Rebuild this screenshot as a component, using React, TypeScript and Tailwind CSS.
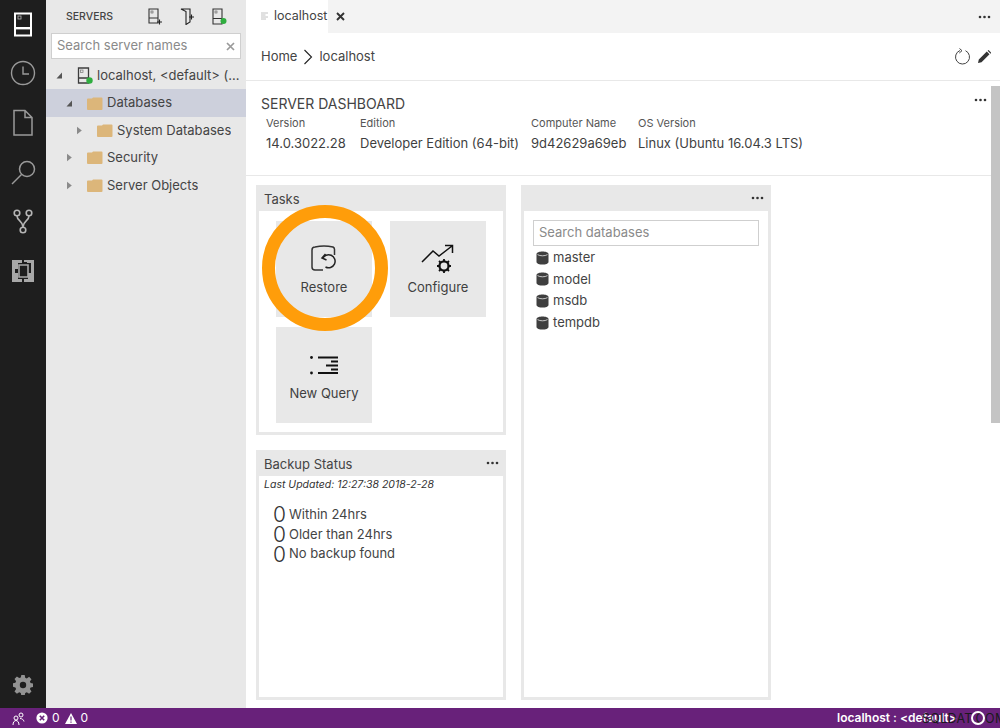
import React from "react";

const Dots = ({ className = "" }: { className?: string }) => (
  <svg width="13" height="4" viewBox="0 0 13 4" className={className}>
    <circle cx="2" cy="2" r="1.3" fill="#333" />
    <circle cx="6.5" cy="2" r="1.3" fill="#333" />
    <circle cx="11" cy="2" r="1.3" fill="#333" />
  </svg>
);

const Folder = () => (
  <svg width="16" height="13" viewBox="0 0 16 13" className="shrink-0">
    <path d="M0 2.5a1 1 0 0 1 1-1h4l1-1h8.5a1 1 0 0 1 1 1v10.5a1 1 0 0 1-1 1H1a1 1 0 0 1-1-1z" fill="#dcb67a" />
  </svg>
);

const Arrow = ({ open }: { open?: boolean }) => (
  <svg width="7" height="9" viewBox="0 0 7 9" className="shrink-0">
    {open ? <path d="M6 1.5V7.5H0.5z" fill="#555" /> : <path d="M1 0.8L5.8 4.5 1 8.2z" fill="#8a8a8a" />}
  </svg>
);

const ServerIcon = ({ dot }: { dot?: boolean }) => (
  <svg width="17" height="18" viewBox="0 0 17 18" className="shrink-0">
    <path d="M1.5 1h10v15h-10zM1.5 11h10" fill="none" stroke="#3c3c3c" strokeWidth="1.3" />
    <rect x="3.5" y="3" width="2.5" height="2.5" fill="none" stroke="#777" strokeWidth="0.7" />
    {dot && <circle cx="12.5" cy="13.5" r="3.2" fill="#2fae3f" />}
  </svg>
);

const Cylinder = () => (
  <svg width="13" height="14" viewBox="0 0 13 14" className="shrink-0">
    <path d="M0.5 3c0-3.4 12-3.4 12 0v8c0 3.4-12 3.4-12 0z" fill="#3f3f3f" />
    <path d="M1.5 3.6c2.5 1.6 7.5 1.6 10 0" stroke="#e8e8e8" strokeWidth="0.8" fill="none" />
  </svg>
);

const Row = ({ indent, open, icon, label, selected }: { indent: string; open?: boolean; icon: React.ReactNode; label: string; selected?: boolean }) => (
  <div className={`flex h-[27.4px] items-center ${indent} ${selected ? "bg-[#cdd0dc]" : ""}`}>
    <Arrow open={open} />
    <span className="ml-[14px] flex w-[20px] shrink-0 items-center">{icon}</span>
    <span className="truncate text-[13px] text-[#444]">{label}</span>
  </div>
);

const Tile = ({ icon, label }: { icon: React.ReactNode; label: string }) => (
  <div className="flex h-[96px] w-[96px] flex-col items-center bg-[#e8e8e8] pt-[23px]">
    <span className="flex h-[30px] items-center">{icon}</span>
    <span className="mt-[3px] text-[13px] leading-[20px] text-[#3f3f3f]">{label}</span>
  </div>
);

const Widget = ({ title, dots, className = "", children }: { title?: string; dots?: boolean; className?: string; children?: React.ReactNode }) => (
  <div className={`flex w-[250px] flex-col border-[3px] border-t-0 border-[#e8e8e8] bg-white ${className}`}>
    <div className="-mx-[3px] flex h-[26px] shrink-0 items-center justify-between bg-[#e8e8e8] pl-[8px] pr-[7px] text-[13px] text-[#444]">
      <span className="pt-[3px]">{title}</span>
      {dots && <Dots />}
    </div>
    {children}
  </div>
);

const Stat = ({ label }: { label: string }) => (
  <div className="flex h-[19.7px] items-center">
    <span className="w-[16px] text-[21px] font-light leading-none text-[#333]">0</span>
    <span className="text-[13px] text-[#444]">{label}</span>
  </div>
);

const Prop = ({ w, k, v }: { w: string; k: string; v: string }) => (
  <div className={`${w} shrink-0`}>
    <div className="text-[11px] leading-[15px] text-[#555]">{k}</div>
    <div className="mt-[3px] whitespace-nowrap text-[13px] leading-[18px] text-[#3f3f3f]">{v}</div>
  </div>
);

export default function App() {
  return (
    <div className="relative flex h-[728px] w-[1000px] flex-col overflow-hidden bg-white font-['Inter','Noto_Sans',sans-serif]">
      <div className="flex min-h-0 flex-1">
        {/* Activity bar */}
        <div className="flex w-[46px] shrink-0 flex-col items-center justify-between bg-[#1e1e1e] pb-[13px] pt-[11px]">
          <div className="flex flex-col items-center gap-[19px]">
            <svg width="30" height="30" viewBox="0 0 30 30">
              <path d="M7 2.5h16v22H7z" fill="none" stroke="#fff" strokeWidth="2" />
              <path d="M7 16h16v2.4H7z" fill="#fff" />
              <rect x="10" y="5" width="3" height="3" fill="none" stroke="#bbb" strokeWidth="0.8" />
            </svg>
            <svg width="30" height="30" viewBox="0 0 30 30">
              <circle cx="15" cy="13" r="11.5" fill="none" stroke="#9a9a9a" strokeWidth="1.4" />
              <path d="M15 6.5v7.5h6" fill="none" stroke="#9a9a9a" strokeWidth="1.4" />
            </svg>
            <svg width="30" height="30" viewBox="0 0 30 30">
              <path d="M6 1.5h11l7 7v17.5H6zM17 1.5v7h7" fill="none" stroke="#9a9a9a" strokeWidth="1.5" />
            </svg>
            <svg width="30" height="30" viewBox="0 0 30 30">
              <circle cx="19" cy="11" r="7.5" fill="none" stroke="#9a9a9a" strokeWidth="1.5" />
              <path d="M13.5 16.5L4 26" fill="none" stroke="#9a9a9a" strokeWidth="1.5" />
            </svg>
            <svg width="30" height="30" viewBox="0 0 30 30">
              <circle cx="9" cy="6" r="2.8" fill="none" stroke="#b5b5b5" strokeWidth="1.6" />
              <circle cx="21" cy="6" r="2.8" fill="none" stroke="#b5b5b5" strokeWidth="1.6" />
              <circle cx="15" cy="23" r="2.8" fill="none" stroke="#b5b5b5" strokeWidth="1.6" />
              <path d="M9 9c0 5 6 5 6 11M21 9c0 5-6 5-6 11" fill="none" stroke="#b5b5b5" strokeWidth="1.6" />
            </svg>
            <svg width="30" height="30" viewBox="0 0 30 30">
              <path d="M4 4h10v3h-4v6H7v4h3v6h4v3H4zM16 4h10v10h-3V7h-4v-1h-3zM16 26v-3h4v-6h3v-3h3v12z" fill="#a8a8a8" />
              <path d="M11 9h9v12h-9z" fill="none" stroke="#a8a8a8" strokeWidth="1.6" />
            </svg>
          </div>
          <svg width="20" height="20" viewBox="0 0 20 20">
            <path d="M8.3 0h3.4l.5 2.7 1.6.7 2.3-1.6 2.4 2.4-1.6 2.3.7 1.6 2.7.5v3.4l-2.7.5-.7 1.6 1.6 2.3-2.4 2.4-2.3-1.6-1.6.7-.5 2.7H8.3l-.5-2.7-1.6-.7-2.3 1.6-2.4-2.4 1.6-2.3-.7-1.6L-.3 11.7V8.3l2.7-.5.7-1.6-1.6-2.3 2.4-2.4 2.3 1.6 1.6-.7z" fill="#929292" />
            <circle cx="10" cy="10" r="3.2" fill="#1e1e1e" />
          </svg>
        </div>

        {/* Sidebar */}
        <div className="flex w-[200px] shrink-0 flex-col bg-[#e8e8e8]">
          <div className="flex h-[33px] items-center pl-[20px] pr-[18px]">
            <span className="text-[10.5px] font-medium text-[#444]">SERVERS</span>
            <div className="ml-auto flex items-center gap-[17px]">
              <svg width="15" height="17" viewBox="0 0 15 17">
                <path d="M1 1h9v14H1zM1 10h9" fill="none" stroke="#333" strokeWidth="1.1" />
                <rect x="3" y="3" width="2" height="2" fill="none" stroke="#555" strokeWidth="0.6" />
                <path d="M9 14h5M11.5 11.5v5" stroke="#222" strokeWidth="1.1" />
              </svg>
              <svg width="15" height="17" viewBox="0 0 15 17">
                <path d="M1 1h9v13l-4 2.5V3.5L1 1zM10 1v13" fill="none" stroke="#222" strokeWidth="1.1" />
                <path d="M9 9h5M11.5 6.5v5" stroke="#222" strokeWidth="1.1" />
              </svg>
              <svg width="16" height="17" viewBox="0 0 16 17">
                <path d="M1 1h9v15H1zM1 10.5h9" fill="none" stroke="#333" strokeWidth="1.1" />
                <rect x="3" y="3" width="2" height="2" fill="none" stroke="#555" strokeWidth="0.6" />
                <circle cx="11.5" cy="13" r="3" fill="#2fae3f" />
              </svg>
            </div>
          </div>
          <div className="mx-[5px] flex h-[26px] items-center justify-between border border-[#cfcfcf] bg-white pl-[5px] pr-[5px]">
            <span className="text-[13px] text-[#8a8a8a]">Search server names</span>
            <svg width="9" height="9" viewBox="0 0 9 9">
              <path d="M1 1l7 7M8 1l-7 7" stroke="#9a9a9a" strokeWidth="1.7" />
            </svg>
          </div>
          <div className="mt-[3px]">
            <Row indent="pl-[10px] pr-[2px]" open icon={<ServerIcon dot />} label="localhost, <default> (s..." />
            <Row indent="pl-[20px]" open selected icon={<Folder />} label="Databases" />
            <Row indent="pl-[30px]" icon={<Folder />} label="System Databases" />
            <Row indent="pl-[20px]" icon={<Folder />} label="Security" />
            <Row indent="pl-[20px]" icon={<Folder />} label="Server Objects" />
          </div>
        </div>

        {/* Main */}
        <div className="relative flex min-w-0 flex-1 flex-col">
          <div className="flex h-[33px] shrink-0 items-center bg-[#f3f3f3]">
            <div className="flex h-full w-[82px] items-center bg-white pl-[15px] pt-[0px]">
              <svg width="8" height="9" viewBox="0 0 8 9" className="shrink-0">
                <path d="M0 1h7M0 3h4.5M0 5h7M0 7h5" stroke="#c2c2c2" strokeWidth="1" />
              </svg>
              <span className="ml-[5px] text-[12.5px] text-[#444]">localhost</span>
              <svg width="9" height="9" viewBox="0 0 9 9" className="ml-[9px] shrink-0">
                <path d="M1 1l7 7M8 1l-7 7" stroke="#333" strokeWidth="1.9" />
              </svg>
            </div>
            <Dots className="ml-auto mr-[9px]" />
          </div>
          <div className="flex h-[48px] shrink-0 items-center border-b border-[#e8e8e8] pl-[15px] pr-[9px]">
            <span className="text-[13px] text-[#444]">Home</span>
            <svg width="10" height="16" viewBox="0 0 10 16" className="mx-[6px]">
              <path d="M1.5 1l7 7-7 7" fill="none" stroke="#222" strokeWidth="1.1" />
            </svg>
            <span className="text-[13px] text-[#444]">localhost</span>
            <svg width="17" height="18" viewBox="0 0 17 18" className="ml-auto">
              <path d="M6 2.5a7 7 0 1 0 5.5.2M5.5 0.5L8 2.7 5.3 5" fill="none" stroke="#444" strokeWidth="1" />
            </svg>
            <svg width="13" height="13" viewBox="0 0 13 13" className="ml-[7px]">
              <path d="M0 13l.8-3.5L8.8 1.5l2.7 2.7-8 8zM9.6.7l1-.7 2.7 2.7-.7 1z" fill="#333" />
            </svg>
          </div>
          <div className="flex h-[95px] shrink-0 flex-col border-b border-[#e8e8e8] pl-[15px] pt-[14px]">
            <div className="text-[14px] leading-[17px] text-[#444]">SERVER DASHBOARD</div>
            <div className="ml-[5px] mt-[4px] flex">
              <Prop w="w-[94px]" k="Version" v="14.0.3022.28" />
              <Prop w="w-[171px]" k="Edition" v="Developer Edition (64-bit)" />
              <Prop w="w-[107px]" k="Computer Name" v="9d42629a69eb" />
              <Prop w="w-[200px]" k="OS Version" v="Linux (Ubuntu 16.04.3 LTS)" />
            </div>
          </div>
          <div className="flex min-h-0 flex-1 gap-[15px] pl-[10px] pt-[9px]">
            <div className="flex flex-col gap-[15px]">
              <Widget title="Tasks" className="h-[250px]">
                <div className="flex flex-wrap gap-x-[18px] gap-y-[10px] pl-[17px] pt-[10px]">
                  <Tile
                    label="Restore"
                    icon={
                      <svg width="30" height="30" viewBox="0 0 30 30">
                        <path d="M14 26H6a3 3 0 0 1-3-3V6a3 3 0 0 1 3-3c5-1 13-1 18 0a3 3 0 0 1 1.5 3v5" fill="none" stroke="#333" strokeWidth="1.5" />
                        <path d="M13.5 15a6.5 6.5 0 1 1 3 8M16.5 10l-3.5 4 4.5 2" fill="none" stroke="#222" strokeWidth="1.5" />
                      </svg>
                    }
                  />
                  <Tile
                    label="Configure"
                    icon={
                      <svg width="34" height="30" viewBox="0 0 34 30">
                        <path d="M1 18l11-11 6 5 13-10M24 1.5h7.5V9" fill="none" stroke="#111" strokeWidth="1.5" />
                        <circle cx="23" cy="22" r="4.5" fill="none" stroke="#111" strokeWidth="2.4" />
                        <path d="M23 15v14M16 22h14M18 17l10 10M28 17L18 27" stroke="#111" strokeWidth="1.8" />
                        <circle cx="23" cy="22" r="3.4" fill="#e8e8e8" />
                      </svg>
                    }
                  />
                  <Tile
                    label="New Query"
                    icon={
                      <svg width="30" height="24" viewBox="0 0 30 24">
                        <circle cx="2.5" cy="4.5" r="1.4" fill="#111" />
                        <circle cx="2.5" cy="20" r="1.4" fill="#111" />
                        <path d="M9 4.5h20M17 12.5h12M9 20h20" stroke="#111" strokeWidth="2.2" />
                        <path d="M22 8.5h7M22 16.5h7" stroke="#111" strokeWidth="2.2" />
                      </svg>
                    }
                  />
                </div>
              </Widget>
              <Widget title="Backup Status" dots className="h-[250px]">
                <div className="pl-[5px] pt-[1px] text-[10.5px] italic leading-[16px] text-[#333]">Last Updated: 12:27:38 2018-2-28</div>
                <div className="pl-[14px] pt-[12px]">
                  <Stat label="Within 24hrs" />
                  <Stat label="Older than 24hrs" />
                  <Stat label="No backup found" />
                </div>
              </Widget>
            </div>
            <Widget dots className="h-[515px]">
              <div className="mx-[9px] mt-[9px] flex h-[26px] shrink-0 items-center border border-[#cfcfcf] pl-[5px] text-[13px] text-[#8a8a8a]">Search databases</div>
              <div className="pl-[12px] pt-[1px]">
                {["master", "model", "msdb", "tempdb"].map((n) => (
                  <div key={n} className="flex h-[21.6px] items-center gap-[4px] text-[13px] text-[#444]">
                    <Cylinder />
                    {n}
                  </div>
                ))}
              </div>
            </Widget>
          </div>
          <div className="absolute right-0 top-[86px] h-[337px] w-[9px] bg-[#c4c4c4]" />
          <Dots className="absolute right-[13px] top-[98px]" />
        </div>
      </div>

      {/* Status bar */}
      <div className="flex h-[20px] shrink-0 items-center bg-[#68217a] pl-[12px] text-[12px] text-white">
        <svg width="13" height="13" viewBox="0 0 13 13">
          <circle cx="9" cy="3" r="2" fill="none" stroke="#fff" strokeWidth="1" />
          <circle cx="4" cy="6" r="2" fill="none" stroke="#fff" strokeWidth="1" />
          <path d="M1 13c0-3 1.5-4.5 3-4.5S7 10 7 13M8 6.5c2 0 3.5 1 4 3" fill="none" stroke="#fff" strokeWidth="1" />
        </svg>
        <svg width="12" height="12" viewBox="0 0 12 12" className="ml-[11px]">
          <circle cx="6" cy="6" r="5.6" fill="#fff" />
          <path d="M3.8 3.8l4.4 4.4M8.2 3.8L3.8 8.2" stroke="#68217a" strokeWidth="1.6" />
        </svg>
        <span className="ml-[4px]">0</span>
        <svg width="12" height="11" viewBox="0 0 12 11" className="ml-[5px]">
          <path d="M6 0l6 11H0z" fill="#fff" />
          <path d="M6 3.5v4M6 8.5v1.3" stroke="#68217a" strokeWidth="1.2" />
        </svg>
        <span className="ml-[4px]">0</span>
        <span className="ml-auto w-[163px] shrink-0 overflow-hidden whitespace-nowrap font-semibold">localhost : &lt;default&gt;</span>
      </div>

      {/* Overlays */}
      <div className="absolute left-[262px] top-[205px] h-[126px] w-[126px] rounded-full border-[13px] border-[#ff9d0a]" />
      <div className="absolute left-[922px] top-[710px] whitespace-nowrap text-[12.5px] tracking-[0.3px] text-[#1a1a1a]">SQLDAT.COM</div>
      <div className="absolute left-[971px] top-[711px] h-[14px] w-[14px] rounded-full border-2 border-white" />
    </div>
  );
}
